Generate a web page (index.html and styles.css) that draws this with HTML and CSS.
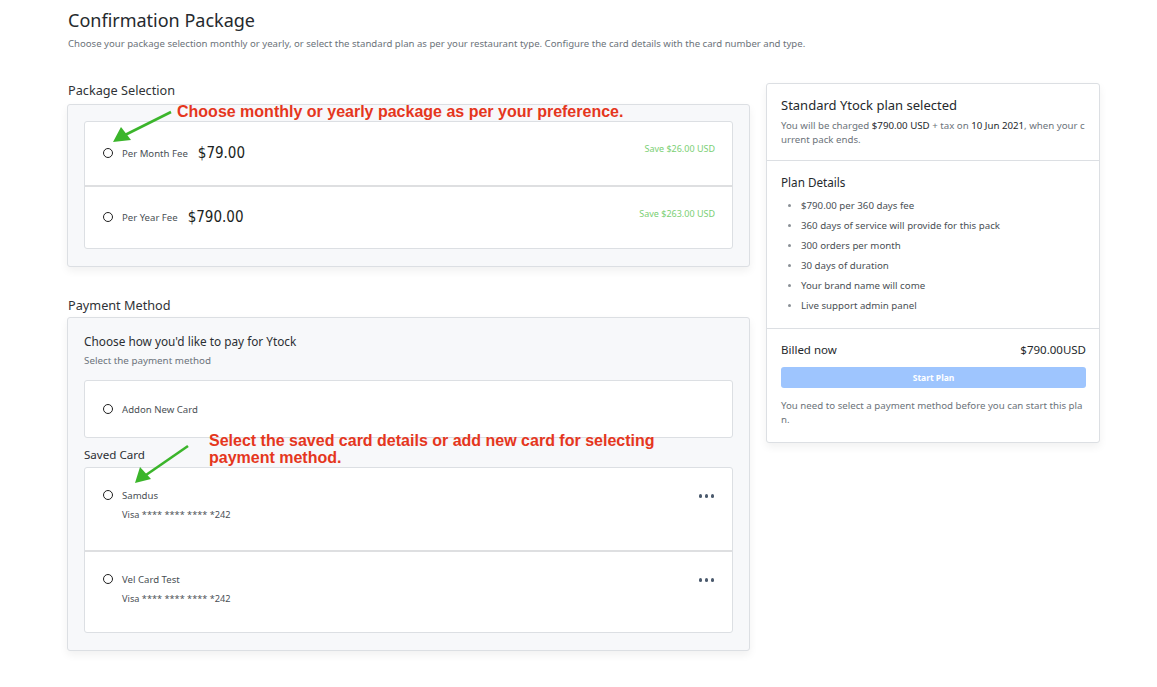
FILE: index.html
```html
<!DOCTYPE html>
<html lang="en">
<head>
    <meta charset="UTF-8">
    <meta name="viewport" content="width=device-width, initial-scale=1.0">
    <title>Confirmation Package</title>
    <link rel="stylesheet" href="styles.css">
</head>
<body>
    <main class="page">

        <header class="page-head">
            <h1>Confirmation Package</h1>
            <p>Choose your package selection monthly or yearly, or select the standard plan as per your restaurant type. Configure the card details with the card number and type.</p>
        </header>

        <div class="layout">
            <div class="main-col">

                <section class="block">
                    <h2 class="block-title">Package Selection</h2>
                    <div class="panel">
                        <div class="option-list">
                            <label class="option package">
                                <span class="radio"></span>
                                <span class="option-name">Per Month Fee</span>
                                <span class="price">$79.00</span>
                                <span class="save">Save $26.00 USD</span>
                            </label>
                            <label class="option package">
                                <span class="radio"></span>
                                <span class="option-name">Per Year Fee</span>
                                <span class="price">$790.00</span>
                                <span class="save">Save $263.00 USD</span>
                            </label>
                        </div>
                    </div>
                </section>

                <section class="block block-payment">
                    <h2 class="block-title">Payment Method</h2>
                    <div class="panel">
                        <h3 class="panel-title">Choose how you'd like to pay for Ytock</h3>
                        <p class="panel-sub">Select the payment method</p>

                        <div class="option-list addon">
                            <label class="option addon-row">
                                <span class="radio"></span>
                                <span class="option-name">Addon New Card</span>
                            </label>
                        </div>

                        <h3 class="saved-title">Saved Card</h3>
                        <div class="option-list">
                            <div class="option card-row">
                                <div class="card-main">
                                    <div class="card-line">
                                        <span class="radio"></span>
                                        <span class="option-name">Samdus</span>
                                    </div>
                                    <div class="card-num">Visa **** **** **** *242</div>
                                </div>
                                <span class="more"><i></i><i></i><i></i></span>
                            </div>
                            <div class="option card-row">
                                <div class="card-main">
                                    <div class="card-line">
                                        <span class="radio"></span>
                                        <span class="option-name">Vel Card Test</span>
                                    </div>
                                    <div class="card-num">Visa **** **** **** *242</div>
                                </div>
                                <span class="more"><i></i><i></i><i></i></span>
                            </div>
                        </div>
                    </div>
                </section>

            </div>

            <aside class="summary">
                <div class="summary-sec">
                    <h3 class="summary-title big">Standard Ytock plan selected</h3>
                    <p class="summary-text">You will be charged <span class="em">$790.00 USD</span> + tax on <span class="em">10 Jun 2021</span>, when your current pack ends.</p>
                </div>
                <div class="summary-sec">
                    <h3 class="summary-title">Plan Details</h3>
                    <ul class="plan-list">
                        <li>$790.00 per 360 days fee</li>
                        <li>360 days of service will provide for this pack</li>
                        <li>300 orders per month</li>
                        <li>30 days of duration</li>
                        <li>Your brand name will come</li>
                        <li>Live support admin panel</li>
                    </ul>
                </div>
                <div class="summary-sec">
                    <div class="billed">
                        <span>Billed now</span>
                        <span>$790.00USD</span>
                    </div>
                    <button class="start-btn" disabled>Start Plan</button>
                    <p class="summary-text note">You need to select a payment method before you can start this plan.</p>
                </div>
            </aside>
        </div>

        <!-- help annotations drawn over the screenshot -->
        <div class="note-red note-one">Choose monthly or yearly package as per your preference.</div>
        <div class="note-red note-two">Select the saved card details or add new card for selecting<br>payment method.</div>

        <svg class="arrow arrow-one" width="70" height="40" viewBox="0 0 70 40">
            <line x1="66" y1="3" x2="20" y2="26" stroke="#3bb52b" stroke-width="2.6"/>
            <polygon points="8,33 16,18 26,31" fill="#3bb52b"/>
        </svg>
        <svg class="arrow arrow-two" width="64" height="44" viewBox="0 0 64 44">
            <line x1="60" y1="3" x2="18" y2="32" stroke="#3bb52b" stroke-width="2.6"/>
            <polygon points="7,40 12,24 23,36" fill="#3bb52b"/>
        </svg>

    </main>
</body>
</html>
```

FILE: styles.css
```css
:root {
    --text-dark: #2b2f33;
    --text-muted: #6c737a;
    --line: #dcdfe3;
    --panel-bg: #f7f8fa;
    --green: #7bcf74;
    --red: #e5361d;
}

* {
    margin: 0;
    padding: 0;
    box-sizing: border-box;
}

body {
    background-color: #fff;
    color: var(--text-dark);
    font-family: 'Noto Sans', 'Open Sans', sans-serif;
}

.page {
    position: relative;
    width: 1157px;
    padding: 8px 0 30px 67px;
}

.page-head {
    padding-left: 1px;
}

.page-head h1 {
    font-size: 18px;
    font-weight: 400;
    line-height: 24px;
    color: #25292d;
}

.page-head p {
    margin-top: 6px;
    font-size: 9.6px;
    line-height: 12px;
    color: var(--text-muted);
}

.layout {
    display: grid;
    grid-template-columns: 683px 334px;
    gap: 16px;
    margin-top: 32px;
    align-items: start;
}

.block-title {
    padding-left: 1px;
    font-size: 12.7px;
    font-weight: 400;
    line-height: 16px;
    color: #2f3337;
    margin-bottom: 6px;
}

.block-payment {
    margin-top: 30px;
}

.block-payment .block-title {
    margin-bottom: 4px;
}

.panel {
    background-color: var(--panel-bg);
    border: 1px solid var(--line);
    border-radius: 3px;
    padding: 16px 16px 17px;
    box-shadow: 0 4px 8px rgba(0, 0, 0, 0.06);
}

.option-list {
    background-color: #fff;
    border: 1px solid var(--line);
    border-radius: 3px;
}

.option {
    display: flex;
    align-items: center;
    padding: 0 17px 0 18px;
}

.option + .option {
    border-top: 2px solid #dedfe1;
}

.package {
    height: 63px;
    padding-bottom: 1px;
}

.radio {
    width: 10px;
    height: 10px;
    border: 1.5px solid #1f1f1f;
    border-radius: 50%;
    flex-shrink: 0;
    margin-right: 9px;
}

.option-name {
    font-size: 9.6px;
    color: #4a4f55;
}

.price {
    margin-left: 10px;
    font-family: 'Liberation Sans Narrow', 'DejaVu Sans Condensed', sans-serif;
    font-size: 15px;
    color: #1c1f22;
}

.save {
    margin-left: auto;
    align-self: flex-start;
    margin-top: 21px;
    font-size: 9px;
    line-height: 12px;
    color: var(--green);
}

.panel-title {
    font-size: 11.8px;
    font-weight: 400;
    line-height: 14px;
    margin-top: 0;
    color: #2b2f33;
}

.panel-sub {
    margin-top: 6px;
    font-size: 9.8px;
    line-height: 14px;
    color: var(--text-muted);
}

.addon {
    margin-top: 12px;
}

.addon-row {
    height: 56px;
}

.saved-title {
    margin-top: 9px;
    font-size: 11.6px;
    font-weight: 400;
    line-height: 16px;
    color: #2b2f33;
    margin-bottom: 4px;
}

.card-row {
    align-items: flex-start;
    height: 82px;
    padding-top: 19px;
}

.card-line {
    display: flex;
    align-items: center;
    height: 16px;
}

.card-num {
    margin-top: 4px;
    padding-left: 19px;
    font-size: 9.2px;
    line-height: 16px;
    color: #4a4f55;
}

.more {
    margin-left: auto;
    display: flex;
    gap: 2.5px;
    margin-top: 7px;
    padding-right: 1px;
}

.more i {
    width: 3.5px;
    height: 3.5px;
    border-radius: 50%;
    background-color: #4b5a6d;
}

/* right column */
.summary {
    margin-top: 1px;
    border: 1px solid var(--line);
    border-radius: 3px;
    box-shadow: 0 4px 8px rgba(0, 0, 0, 0.06);
    background-color: #fff;
}

.summary-sec {
    padding: 13px 13px 13px 14px;
}

.summary-sec + .summary-sec {
    border-top: 1px solid var(--line);
}

.summary-title {
    font-size: 11.7px;
    font-weight: 400;
    line-height: 16px;
    color: #25292d;
}

.summary-title.big {
    font-size: 13px;
}

.summary-text {
    margin-top: 6px;
    font-size: 9.7px;
    line-height: 14px;
    color: var(--text-muted);
    word-break: break-all;
}

.summary-text .em {
    color: #25292d;
}

.plan-list {
    margin-top: 6px;
    margin-bottom: -1px;
    padding-left: 20px;
    font-size: 9.7px;
    line-height: 20px;
    color: #4a4f55;
}

.plan-list li::marker {
    color: #8a9096;
    font-size: 8px;
}

.billed {
    display: flex;
    justify-content: space-between;
    font-size: 11.5px;
    line-height: 16px;
    color: #25292d;
}

.start-btn {
    display: block;
    width: 100%;
    height: 21px;
    margin-top: 9px;
    border: none;
    border-radius: 3px;
    background-color: #9ec5fe;
    color: #fff;
    font-family: inherit;
    font-size: 8.5px;
    font-weight: 700;
}

.note {
    margin-top: 11px;
    padding-bottom: 2px;
}

/* annotations */
.note-red {
    position: absolute;
    font-family: 'Liberation Sans', Arial, sans-serif;
    font-weight: 700;
    font-size: 16px;
    line-height: 17px;
    color: var(--red);
    white-space: nowrap;
}

.note-one {
    left: 177px;
    top: 103px;
}

.note-two {
    left: 209px;
    top: 432px;
}

.arrow {
    position: absolute;
}

.arrow-one {
    left: 105px;
    top: 109px;
}

.arrow-two {
    left: 128px;
    top: 443px;
}
```
